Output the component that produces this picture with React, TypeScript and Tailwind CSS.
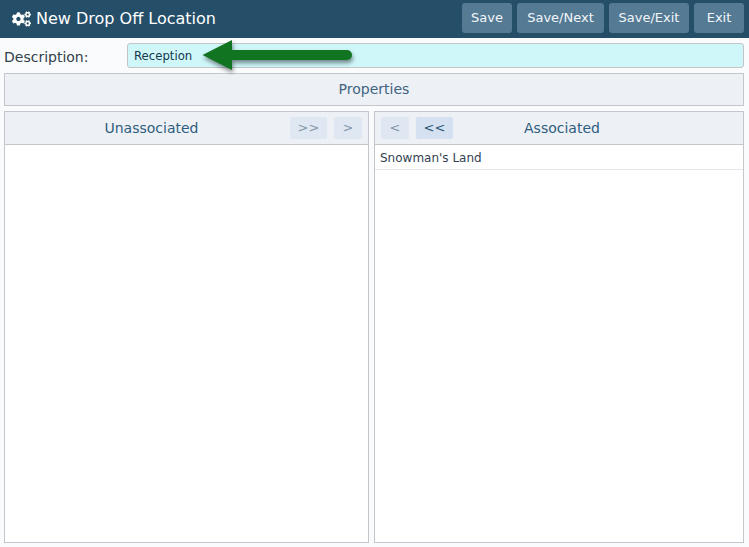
import React from 'react';
import { FaCogs } from 'react-icons/fa';

const font = "font-['DejaVu_Sans',Verdana,sans-serif]";

const HeaderButton: React.FC<{ label: string; width: string }> = ({ label, width }) => (
  <button type="button" className={`h-[30px] ${width} bg-[#557a94] rounded-[3px] text-[#f2f6f9] text-[13px] font-normal flex items-center justify-center`}>
    {label}
  </button>
);

const MoveButton: React.FC<{ label: string; width: string; active?: boolean }> = ({ label, width, active }) => (
  <button
    type="button"
    className={`h-[22px] ${width} rounded-[2px] text-[13px] flex items-center justify-center ${active ? 'bg-[#d5e1f1] text-[#2a5578]' : 'bg-[#dfe7f2] text-[#8497a8]'}`}
  >
    {label}
  </button>
);

export default function App() {
  return (
    <div className={`relative w-[749px] h-[547px] bg-[#f9fbfd] overflow-hidden flex flex-col ${font}`}>
      <div className="h-[38px] shrink-0 bg-[#254e68] flex items-center justify-between pl-3 pr-[5px]">
        <div className="flex items-center gap-[5px] text-white text-[16px]">
          <FaCogs className="w-[19px] h-[16px]" />
          <span>New Drop Off Location</span>
        </div>
        <div className="flex gap-[5px] pb-[2px]">
          <HeaderButton label="Save" width="w-[50px]" />
          <HeaderButton label="Save/Next" width="w-[87px]" />
          <HeaderButton label="Save/Exit" width="w-[80px]" />
          <HeaderButton label="Exit" width="w-[50px]" />
        </div>
      </div>

      <div className="flex-1 flex flex-col pl-1 pr-[5px] pt-[5px] pb-1 gap-[5px] min-h-0">
        <div className="flex items-center h-[25px]">
          <label className="w-[123px] text-[14px] text-[#333f48] pt-[3px]">Description:</label>
          <input
            readOnly
            value="Reception"
            className="flex-1 h-[25px] bg-[#cff7fa] border border-[#bfc5c9] rounded-[3px] px-[6px] text-[11.7px] text-[#16384f] outline-none"
          />
        </div>

        <div className="h-[33px] bg-[#edf0f5] border border-[#c3c7cb] flex items-center justify-center text-[14px] text-[#3f6480]">
          Properties
        </div>

        <div className="flex-1 flex gap-[5px] min-h-0">
          <div className="w-[365px] flex flex-col border border-[#c3c7cb] bg-white">
            <div className="h-[33px] shrink-0 bg-[#edf0f5] border-b border-[#c3c7cb] flex items-center pr-[6px]">
              <span className="flex-1 text-center text-[14px] text-[#2f5d7e] pl-[8px]">Unassociated</span>
              <div className="flex gap-[7px]">
                <MoveButton label=">>" width="w-[37px]" />
                <MoveButton label=">" width="w-[28px]" />
              </div>
            </div>
          </div>

          <div className="flex-1 flex flex-col border border-[#c3c7cb] bg-white">
            <div className="h-[33px] shrink-0 bg-[#edf0f5] border-b border-[#c3c7cb] flex items-center pl-[6px] pr-[72px]">
              <div className="flex gap-[7px]">
                <MoveButton label="<" width="w-[28px]" />
                <MoveButton label="<<" width="w-[37px]" active />
              </div>
              <span className="flex-1 text-center text-[14px] text-[#2f5d7e]">Associated</span>
            </div>
            <div className="h-[25px] border-b border-[#e4e7ea] flex items-center px-[5px] pt-[1px] text-[12px] text-[#333f52]">
              Snowman's Land
            </div>
          </div>
        </div>
      </div>

      <svg
        className="absolute left-[200px] top-[38px] pointer-events-none drop-shadow-[1px_3px_2px_rgba(0,0,0,0.45)]"
        width="160"
        height="36"
        viewBox="0 0 160 36"
      >
        <path d="M2.5 17 L32 2 V12 H147 a5 5 0 0 1 0 10 H32 V32 Z" fill="#107420" />
      </svg>
    </div>
  );
}
